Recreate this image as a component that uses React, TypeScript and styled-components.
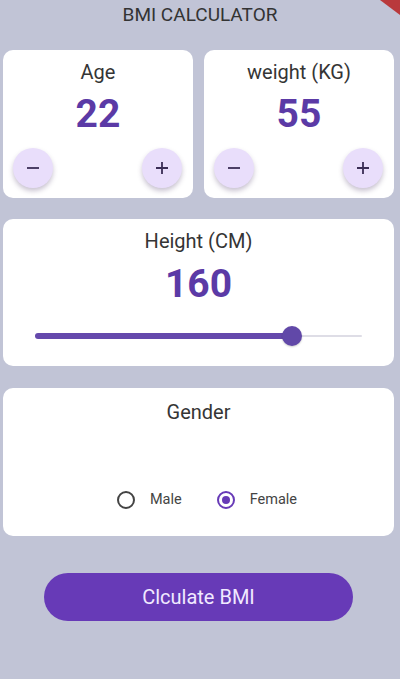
import React, { useState } from "react";
import styled, { createGlobalStyle } from "styled-components";

const purple = "#673ab7";
const numberPurple = "#5b3aa6";

const GlobalStyle = createGlobalStyle`
  html, body {
    margin: 0;
    padding: 0;
    background: #c1c4d6;
  }
  body {
    font-family: Roboto, "Noto Sans", sans-serif;
  }
`;

const Screen = styled.div`
  position: relative;
  width: 400px;
  height: 679px;
  overflow: hidden;
  background: #c1c4d6;
  box-sizing: border-box;
  padding: 0 6px 0 3px;
  display: flex;
  flex-direction: column;
`;

const DebugCorner = styled.div`
  position: absolute;
  top: 0;
  right: 0;
  width: 20px;
  height: 15px;
  background: #b9393c;
  clip-path: polygon(0 0, 100% 0, 100% 100%);
`;

const Title = styled.h1`
  margin: 0;
  height: 50px;
  padding-top: 3px;
  box-sizing: border-box;
  text-align: center;
  font-size: 19px;
  line-height: 24px;
  font-weight: 400;
  color: #333;
  padding-left: 3px;
`;

const Row = styled.div`
  display: flex;
  gap: 11px;
`;

const Card = styled.div<{ $height: number; $top?: number; $grow?: boolean }>`
  flex: ${(p) => (p.$grow ? 1 : "none")};
  height: ${(p) => p.$height}px;
  margin-top: ${(p) => p.$top ?? 0}px;
  background: #fff;
  border-radius: 10px;
  box-sizing: border-box;
  display: flex;
  flex-direction: column;
  align-items: center;
`;

const Label = styled.div<{ $top: number }>`
  margin-top: ${(p) => p.$top}px;
  font-size: 20px;
  line-height: 24px;
  color: #353535;
`;

const Value = styled.div<{ $top: number }>`
  margin-top: ${(p) => p.$top}px;
  font-size: 39px;
  line-height: 44px;
  font-weight: 700;
  color: ${numberPurple};
`;

const Steppers = styled.div`
  margin-top: auto;
  margin-bottom: 10px;
  width: 100%;
  box-sizing: border-box;
  padding: 0 11px 0 10px;
  display: flex;
  justify-content: space-between;
`;

const RoundButton = styled.button`
  width: 40px;
  height: 40px;
  border-radius: 50%;
  border: none;
  background: #e9defb;
  box-shadow: 0 3px 5px rgba(60, 40, 90, 0.28);
  display: flex;
  align-items: center;
  justify-content: center;
  padding: 0;
  color: #3a2d55;
`;

const SliderWrap = styled.div`
  position: relative;
  width: 327px;
  height: 20px;
  margin-top: 20px;
  display: flex;
  align-items: center;
`;

const Track = styled.div`
  width: 100%;
  height: 2px;
  background: #dedde6;
  border-radius: 2px;
`;

const ActiveTrack = styled.div`
  position: absolute;
  left: 0;
  top: 7px;
  height: 6px;
  border-radius: 3px;
  background: #6549ac;
`;

const Thumb = styled.div`
  position: absolute;
  top: 0;
  width: 20px;
  height: 20px;
  margin-left: -10px;
  border-radius: 50%;
  background: #6148a8;
  box-shadow: 0 1px 2px rgba(0, 0, 0, 0.2);
`;

const Radios = styled.div`
  margin-top: auto;
  margin-bottom: 27px;
  display: flex;
  align-items: center;
  padding-left: 17px;
`;

const RadioOption = styled.label`
  display: flex;
  align-items: center;
  margin-right: 35px;
  font-size: 14.5px;
  line-height: 18px;
  color: #444;
  &:last-child {
    margin-right: 0;
  }
`;

const RadioCircle = styled.span<{ $checked: boolean }>`
  width: 18px;
  height: 18px;
  box-sizing: border-box;
  border-radius: 50%;
  border: 2px solid ${(p) => (p.$checked ? purple : "#444")};
  display: flex;
  align-items: center;
  justify-content: center;
  margin-right: 15px;
  &::after {
    content: "";
    width: 8px;
    height: 8px;
    border-radius: 50%;
    background: ${(p) => (p.$checked ? purple : "transparent")};
  }
`;

const CalcButton = styled.button`
  align-self: center;
  margin-top: 37px;
  width: 309px;
  height: 48px;
  border: none;
  border-radius: 24px;
  background: ${purple};
  color: #f1e9ff;
  font-family: Roboto, "Noto Sans", sans-serif;
  font-size: 20px;
`;

const Minus = () => (
  <svg width="16" height="16" viewBox="0 0 16 16">
    <path d="M2 8h12" stroke="currentColor" strokeWidth="1.8" />
  </svg>
);

const Plus = () => (
  <svg width="16" height="16" viewBox="0 0 16 16">
    <path d="M2 8h12M8 2v12" stroke="currentColor" strokeWidth="1.8" />
  </svg>
);

const Counter = ({ label, value }: { label: string; value: number }) => (
  <Card $height={148} $grow>
    <Label $top={10}>{label}</Label>
    <Value $top={8}>{value}</Value>
    <Steppers>
      <RoundButton>
        <Minus />
      </RoundButton>
      <RoundButton>
        <Plus />
      </RoundButton>
    </Steppers>
  </Card>
);

export default function App() {
  const [gender] = useState<"male" | "female">("female");
  const height = 160;
  const ratio = 0.785;

  return (
    <Screen>
      <GlobalStyle />
      <DebugCorner />
      <Title>BMI CALCULATOR</Title>
      <Row>
        <Counter label="Age" value={22} />
        <Counter label="weight (KG)" value={55} />
      </Row>
      <Card $height={147} $top={21}>
        <Label $top={10}>Height (CM)</Label>
        <Value $top={9}>{height}</Value>
        <SliderWrap>
          <Track />
          <ActiveTrack style={{ width: `${ratio * 100}%` }} />
          <Thumb style={{ left: `${ratio * 100}%` }} />
        </SliderWrap>
      </Card>
      <Card $height={148} $top={22}>
        <Label $top={12}>Gender</Label>
        <Radios>
          <RadioOption>
            <RadioCircle $checked={gender === "male"} />
            Male
          </RadioOption>
          <RadioOption>
            <RadioCircle $checked={gender === "female"} />
            Female
          </RadioOption>
        </Radios>
      </Card>
      <CalcButton>Clculate BMI</CalcButton>
    </Screen>
  );
}
